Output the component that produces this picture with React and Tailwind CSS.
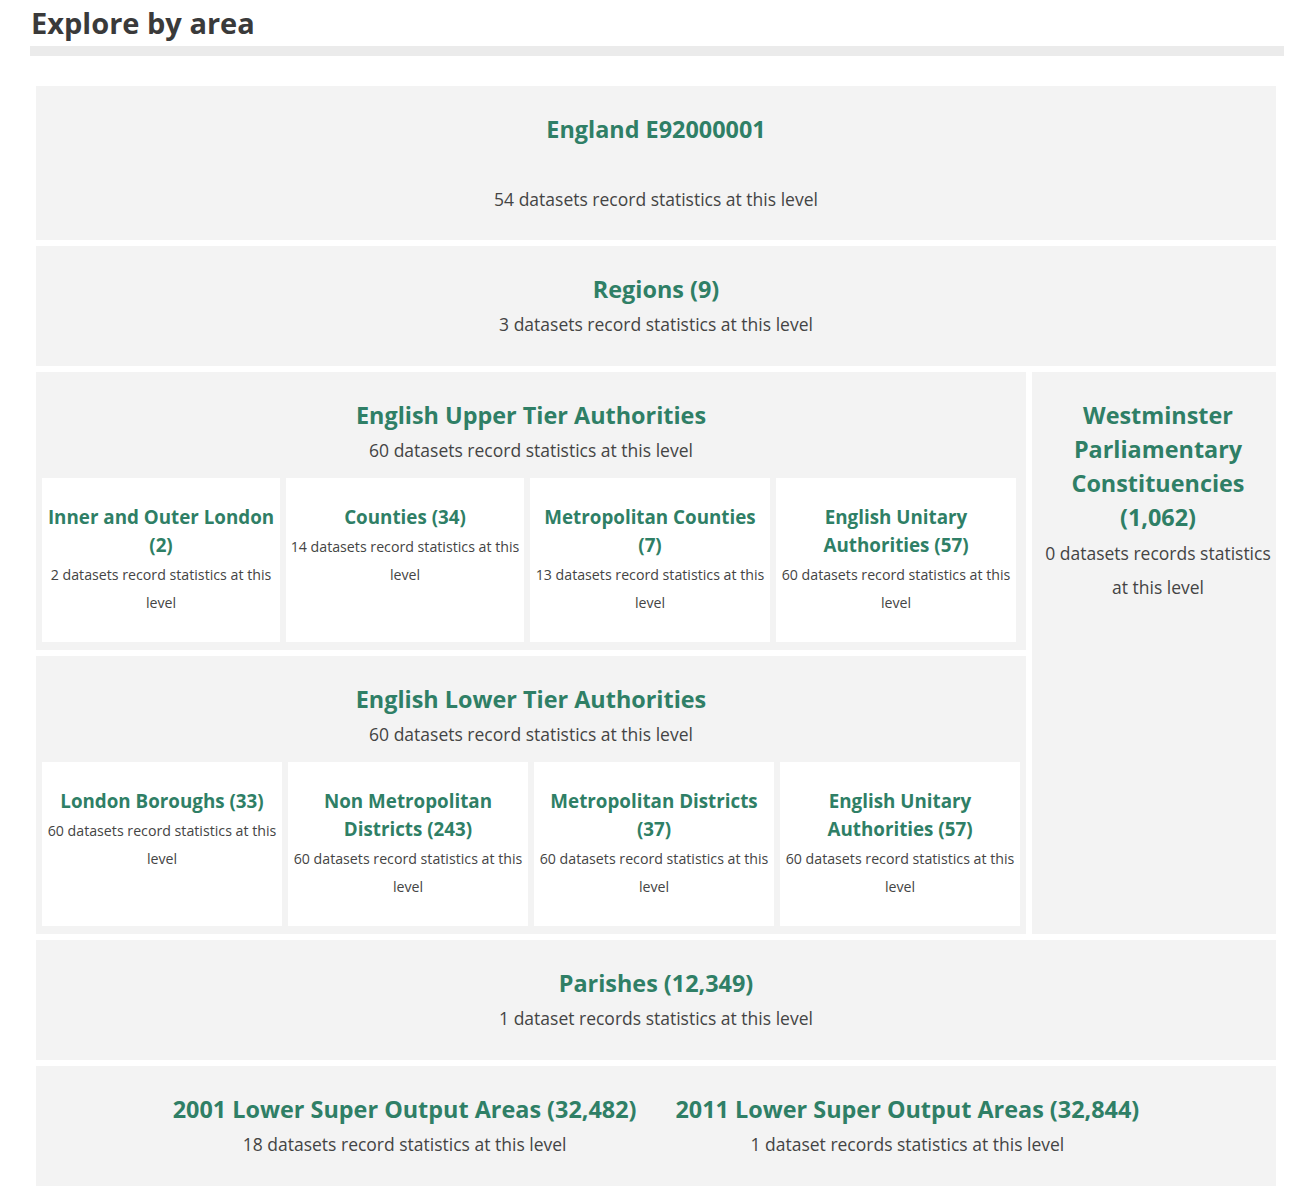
const green = "text-[#2f7f66]";
const title = `text-[23.4px] leading-[34px] font-bold ${green}`;
const desc = "text-[17.5px] leading-[36px]";

function Card({ title, desc, w }) {
  return (
    <div className={`bg-white text-center h-[164px] pt-[25px] px-[4px] ${w}`}>
      <h4 className="text-[18.8px] leading-[28px] font-bold text-[#2f7f66]">{title}</h4>
      <p className="mt-[2px] text-[14.2px] leading-[28px] text-[#444]">{desc}</p>
    </div>
  );
}

const upper = [
  { title: "Inner and Outer London (2)", desc: "2 datasets record statistics at this level", w: "w-[238px]" },
  { title: "Counties (34)", desc: "14 datasets record statistics at this level", w: "w-[238px]" },
  { title: "Metropolitan Counties (7)", desc: "13 datasets record statistics at this level", w: "w-[240px]" },
  { title: "English Unitary Authorities (57)", desc: "60 datasets record statistics at this level", w: "w-[240px]" },
];

const lower = [
  { title: "London Boroughs (33)", desc: "60 datasets record statistics at this level" },
  { title: "Non Metropolitan Districts (243)", desc: "60 datasets record statistics at this level" },
  { title: "Metropolitan Districts (37)", desc: "60 datasets record statistics at this level" },
  { title: "English Unitary Authorities (57)", desc: "60 datasets record statistics at this level" },
];

export default function App() {
  return (
    <div className="min-h-screen bg-white font-['Open_Sans',sans-serif] text-[#444]">
      <div className="pl-[30px] w-[1284px]">
        <h2 className="text-[29px] leading-[46px] font-bold text-[#3a3a3a] pl-[1px]">Explore by area</h2>
        <div className="h-[10px] bg-[#ebebeb]" />
      </div>

      <div className="ml-[36px] w-[1240px] mt-[30px] flex flex-col gap-[6px]">
        {/* England */}
        <div className="bg-[#f3f3f3] text-center pt-[26px] pb-[23px]">
          <h3 className={title}>England E92000001</h3>
          <p className={`mt-[35px] ${desc}`}>54 datasets record statistics at this level</p>
        </div>

        {/* Regions */}
        <div className="bg-[#f3f3f3] text-center pt-[26px] pb-[24px]">
          <h3 className={title}>Regions (9)</h3>
          <p className={desc}>3 datasets record statistics at this level</p>
        </div>

        <div className="flex gap-[6px]">
          <div className="w-[990px] flex flex-col gap-[6px]">
            {/* Upper tier */}
            <div className="bg-[#f3f3f3] text-center pt-[26px] pb-[8px] px-[6px]">
              <h3 className={title}>English Upper Tier Authorities</h3>
              <p className={desc}>60 datasets record statistics at this level</p>
              <div className="mt-[10px] flex gap-[6px]">
                {upper.map((c) => (
                  <Card key={c.title} {...c} />
                ))}
              </div>
            </div>

            {/* Lower tier */}
            <div className="bg-[#f3f3f3] text-center pt-[26px] pb-[8px] px-[6px]">
              <h3 className={title}>English Lower Tier Authorities</h3>
              <p className={desc}>60 datasets record statistics at this level</p>
              <div className="mt-[10px] flex gap-[6px]">
                {lower.map((c) => (
                  <Card key={c.title} {...c} w="w-[240px]" />
                ))}
              </div>
            </div>
          </div>

          {/* Westminster */}
          <div className="w-[244px] bg-[#f3f3f3] text-center pt-[26px] pl-[12px] pr-[4px]">
            <h3 className={title}>Westminster Parliamentary Constituencies (1,062)</h3>
            <p className="mt-[2px] text-[17.5px] leading-[34px]">0 datasets records statistics at this level</p>
          </div>
        </div>

        {/* Parishes */}
        <div className="bg-[#f3f3f3] text-center pt-[26px] pb-[24px]">
          <h3 className={title}>Parishes (12,349)</h3>
          <p className={desc}>1 dataset records statistics at this level</p>
        </div>

        {/* LSOA */}
        <div className="bg-[#f3f3f3] pt-[26px] pb-[24px] flex justify-center gap-[39px] text-center">
          <div>
            <h3 className={title}>2001 Lower Super Output Areas (32,482)</h3>
            <p className={desc}>18 datasets record statistics at this level</p>
          </div>
          <div>
            <h3 className={title}>2011 Lower Super Output Areas (32,844)</h3>
            <p className={desc}>1 dataset records statistics at this level</p>
          </div>
        </div>
      </div>
    </div>
  );
}
